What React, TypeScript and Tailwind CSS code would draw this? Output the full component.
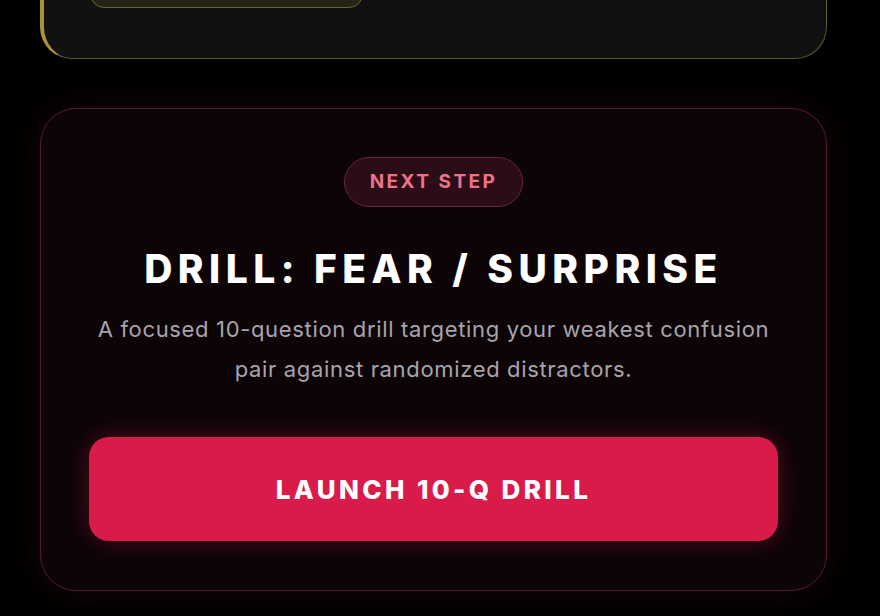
export default function App() {
  return (
    <div
      className="min-h-screen w-full overflow-hidden bg-black pl-10"
      style={{ fontFamily: 'Inter, "Noto Sans", sans-serif' }}
    >
      {/* previous card, cut off at the top */}
      <div className="mt-[-61px] h-[120px] w-[787px] rounded-[32px] border border-[#5f5a2e] border-l-4 border-l-[#a8933c] bg-[#111111] pl-[46px]">
        <div className="h-[68px] w-[273px] rounded-b-[14px] border border-[#6b6534] bg-[#252417]" />
      </div>

      <div className="mt-[49px] flex w-[787px] flex-col items-center rounded-[36px] border border-[#551b2d] bg-[#0c0407] px-12 pt-12 pb-[49px] shadow-[0_0_40px_rgba(120,20,45,0.18)]">
        <span className="flex h-[50px] items-center rounded-full border border-[#6a2537] bg-[#2a0d16] px-[25px] text-[19px] font-bold tracking-[0.13em] text-[#f0718b]">
          NEXT STEP
        </span>
        <h2 className="mt-[38px] text-[39px] font-extrabold leading-[48px] tracking-[0.14em] text-white">
          DRILL: FEAR / SURPRISE
        </h2>
        <p className="mt-[16px] max-w-[700px] text-center text-[22px] leading-[40px] tracking-[0.03em] text-[#a9a4ac]">
          A focused 10-question drill targeting your weakest confusion pair against randomized
          distractors.
        </p>
        <button className="mt-[48px] flex h-[104px] w-full items-center justify-center rounded-[20px] bg-[#d91b49] text-[26px] font-extrabold tracking-[0.13em] text-white shadow-[0_0_24px_rgba(217,27,73,0.35)]">
          LAUNCH 10-Q DRILL
        </button>
      </div>
    </div>
  );
}
